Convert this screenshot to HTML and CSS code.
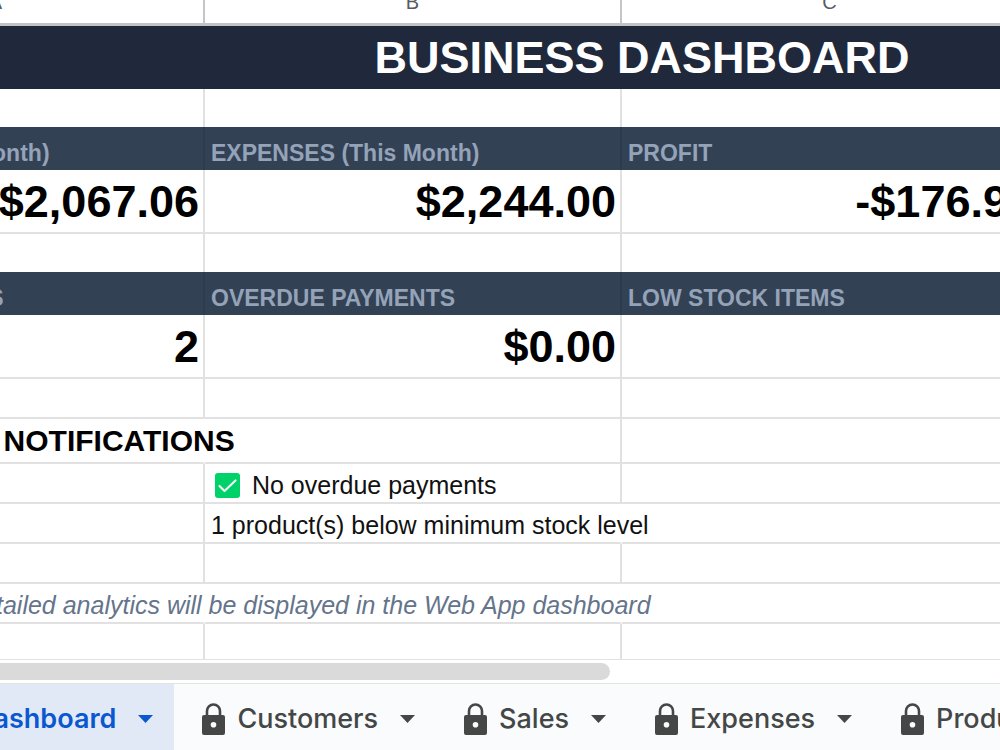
FILE: index.html
```
<!DOCTYPE html>
<html lang="en">
	<head>
		<meta charset="utf-8">
		<title>Business Dashboard</title>
		<link rel="stylesheet" href="styles.css">
	</head>
	<body>
		<svg width="0" height="0" class="symbols" aria-hidden="true">
			<symbol id="lock" viewBox="0 0 23 33">
				<path d="M5 13V8a6.500 6.500 0 0 1 13 0v5" fill="none" stroke="currentColor" stroke-width="2.600"/>
				<path fill="currentColor" fill-rule="evenodd" d="M2 12h19a2 2 0 0 1 2 2v16a2 2 0 0 1-2 2h-19a2 2 0 0 1-2-2v-16a2 2 0 0 1 2-2zM11.500 19a2.800 2.800 0 1 0 0 5.600 2.800 2.800 0 0 0 0-5.600z"/>
			</symbol>
			<symbol id="caret" viewBox="0 0 15 8">
				<path fill="currentColor" d="M0 0h15L7.500 8z"/>
			</symbol>
		</svg>

		<main class="sheet">
			<table class="grid">
				<colgroup>
					<col class="col"><col class="col"><col class="col"><col class="col-last">
				</colgroup>
				<thead>
					<tr class="letters"><th>A</th><th>B</th><th>C</th><th>D</th></tr>
				</thead>
				<tbody>
					<tr class="title"><td colspan="4">BUSINESS DASHBOARD</td></tr>
					<tr class="gap"><td></td><td></td><td></td><td></td></tr>
					<tr class="labels"><td>REVENUE (This Month)</td><td>EXPENSES (This Month)</td><td>PROFIT</td><td></td></tr>
					<tr class="values"><td>$2,067.06</td><td>$2,244.00</td><td>-$176.94</td><td></td></tr>
					<tr class="gap"><td></td><td></td><td></td><td></td></tr>
					<tr class="labels"><td>PENDING ORDERS</td><td>OVERDUE PAYMENTS</td><td>LOW STOCK ITEMS</td><td></td></tr>
					<tr class="values"><td>2</td><td>$0.00</td><td>1</td><td></td></tr>
					<tr><td></td><td></td><td></td><td></td></tr>
					<tr class="heading">
						<td class="spill">
							<svg class="emoji" viewBox="0 0 28 28" aria-hidden="true"><path d="M14 2l13 24H1z" fill="#fbbc04"/></svg>
							ALERTS &amp; NOTIFICATIONS
						</td>
						<td></td><td></td><td></td>
					</tr>
					<tr>
						<td></td>
						<td>
							<svg class="check" viewBox="0 0 25 25" aria-hidden="true"><rect width="25" height="25" rx="3" fill="#00d26a"/><path d="M4.500 13l5 5 11-10.500" fill="none" stroke="#f4f4f4" stroke-width="2.200" stroke-linecap="round" stroke-linejoin="round"/></svg>
							No overdue payments
						</td>
						<td></td><td></td>
					</tr>
					<tr><td></td><td class="spill">1 product(s) below minimum stock level</td><td></td><td></td></tr>
					<tr><td></td><td></td><td></td><td></td></tr>
					<tr class="note">
						<td class="spill">
							<svg class="emoji" viewBox="0 0 28 28" aria-hidden="true"><path d="M3 14h6v12H3zM11 4h6v22h-6zM19 9h6v17h-6z" fill="#4285f4"/></svg>
							Charts and detailed analytics will be displayed in the Web App dashboard
						</td>
						<td class="spill"></td><td></td><td></td>
					</tr>
					<tr class="last"><td></td><td></td><td></td><td></td></tr>
				</tbody>
			</table>
		</main>

		<div class="scroll"><div class="thumb"></div></div>

		<nav class="tabs">
			<button class="tab active" type="button"><svg class="lock"><use href="#lock"/></svg>Dashboard<svg class="caret"><use href="#caret"/></svg></button>
			<button class="tab" type="button"><svg class="lock"><use href="#lock"/></svg>Customers<svg class="caret"><use href="#caret"/></svg></button>
			<button class="tab" type="button"><svg class="lock"><use href="#lock"/></svg>Sales<svg class="caret"><use href="#caret"/></svg></button>
			<button class="tab" type="button"><svg class="lock"><use href="#lock"/></svg>Expenses<svg class="caret"><use href="#caret"/></svg></button>
			<button class="tab" type="button"><svg class="lock"><use href="#lock"/></svg>Products<svg class="caret"><use href="#caret"/></svg></button>
		</nav>
	</body>
</html>
```

FILE: styles.css
```
* {
	box-sizing: border-box;
}
body {
	margin: 0;
	height: 100vh;
	display: flex;
	flex-direction: column;
	overflow: hidden;
	background-color: #fff;
	font-family: "Liberation Sans", Arial, sans-serif;
}
.symbols {
	display: none;
}

/* the sheet is scrolled a little to the right and down */
.sheet {
	flex: none;
	overflow: hidden;
	border-bottom: 1px solid #e1e3e1;
}
.grid {
	table-layout: fixed;
	width: 1708px;
	margin: -20px 0 0 -212px;
	border-collapse: separate;
	border-spacing: 0;
	font-size: 25px;
	line-height: 28px;
	color: #111;
}
.col {
	width: 417px;
}
.col-last {
	width: 457px;
}
.grid td, .grid th {
	height: 40px;
	padding: 4px 6px 0 6px;
	border-right: 2px solid #e1e1e1;
	border-bottom: 2px solid #e1e1e1;
	white-space: nowrap;
	vertical-align: middle;
}
.grid .letters th {
	height: 46px;
	padding: 0;
	border-right-color: #c4c7c5;
	border-bottom: 3px solid #c0c4c3;
	font-size: 20px;
	font-weight: normal;
	color: #575b5f;
}
.grid .title td {
	height: 63px;
	padding: 0;
	border: 0;
	background-color: #1f293b;
	font-size: 45px;
	line-height: 50px;
	font-weight: bold;
	text-align: center;
	color: #fff;
}
.grid .gap td {
	height: 38px;
	border-bottom: 0;
}
.grid .labels td {
	height: 43px;
	padding-top: 8px;
	border-right-color: #2e3b4d;
	border-bottom: 0;
	background-color: #334155;
	font-size: 23px;
	font-weight: bold;
	color: #94a3b8;
}
.grid .values td {
	height: 64px;
	padding-top: 2px;
	padding-right: 4px;
	font-size: 45px;
	line-height: 50px;
	font-weight: bold;
	text-align: right;
	color: #000;
}
.grid .heading td {
	height: 45px;
	padding-top: 0;
	font-size: 30px;
	font-weight: bold;
	color: #000;
}
.grid .note td {
	font-style: italic;
	color: #64748b;
}
.grid .last td {
	height: 35px;
	border-bottom: 0;
}
.grid .spill {
	border-right-color: transparent;
}
.emoji {
	width: 38px;
	height: 28px;
	vertical-align: bottom;
}
.heading .emoji {
	width: 44px;
}
.check {
	width: 25px;
	height: 25px;
	margin: 0 5px 0 4px;
	vertical-align: -4px;
}

.scroll {
	flex: none;
	height: 24px;
	padding: 3px 0;
	border-bottom: 1px solid #e1e3e1;
}
.thumb {
	width: 61%;
	height: 17px;
	border-radius: 0 9px 9px 0;
	background-color: #dadada;
}

.tabs {
	flex: 1;
	display: flex;
	justify-content: flex-start;
	margin-left: -89px;
	background-color: #f9fbfd;
}
.tab {
	flex: none;
	display: flex;
	align-items: center;
	padding: 4px 21px 0 28px;
	border: 0;
	background: none;
	font-family: Inter, Roboto, sans-serif;
	font-size: 27px;
	line-height: 32px;
	font-weight: 500;
	color: #444746;
}
.active {
	background-color: #e1e9f7;
	font-weight: 600;
	color: #0b57d0;
}
.lock {
	width: 23px;
	height: 33px;
	margin-right: 12px;
}
.caret {
	width: 15px;
	height: 8px;
	margin-left: 22px;
}
```
